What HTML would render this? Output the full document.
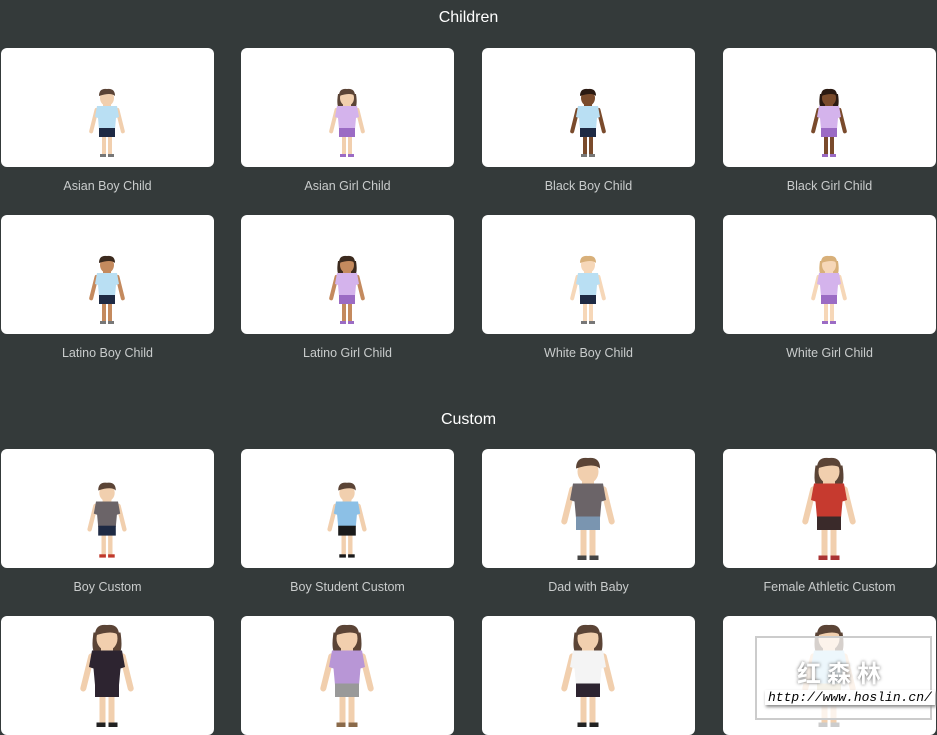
<!DOCTYPE html>
<html><head><meta charset="utf-8"><style>
body{margin:0;width:937px;height:726px;overflow:hidden;background:#343a3a;font-family:"Liberation Sans",sans-serif;position:relative}
h2{position:absolute;left:0;width:937px;text-align:center;color:#fff;font-weight:normal;font-size:16px;margin:0}
.c{position:absolute;width:213px;height:119px;background:#fff;border-radius:6px;overflow:hidden}
.l{position:absolute;width:213px;text-align:center;color:#c9cccc;font-size:12.5px}
svg{position:absolute;left:0;top:0}
.wm{position:absolute;left:755px;top:636px;width:173px;height:80px;background:rgba(255,255,255,.75);border:2px solid #ccc}
.wm b{position:absolute;left:40px;top:16px;color:#fff;font-size:24px;letter-spacing:6px;text-shadow:0 0 3px #666;font-family:"Noto Sans CJK SC",sans-serif}
.wm i{position:absolute;left:8px;top:52px;background:#fff;font-size:13px;font-family:"Liberation Mono",monospace;padding:0 3px;box-shadow:1px 2px 3px #888}
</style></head><body>
<h2 style="top:9px">Children</h2>
<h2 style="top:411px">Custom</h2>
<div id="g"></div>
<div class="wm"><b>红森林</b><i>http://www.hoslin.cn/</i></div>
<script>
var X=[1,241,482,723],T=[48,215,449,616],LY=[179,346,580,0];
var items=[
["Asian Boy Child","#f1cfae","#5b4436","#b9dff3","#1e2a44","#777",0,1.0,43],
["Asian Girl Child","#f1cfae","#5b4436","#d4b3ec","#9b6bc4","#9b6bc4",1,1.0,43],
["Black Boy Child","#7a4b2c","#2b1a12","#b9dff3","#1e2a44","#777",0,1.0,43],
["Black Girl Child","#7a4b2c","#2b1a12","#d4b3ec","#9b6bc4","#9b6bc4",1,1.0,43],
["Latino Boy Child","#c48a5e","#3c2a1e","#b9dff3","#1e2a44","#777",0,1.0,43],
["Latino Girl Child","#c48a5e","#3c2a1e","#d4b3ec","#9b6bc4","#9b6bc4",1,1.0,43],
["White Boy Child","#f6d7b8","#d8b07a","#b9dff3","#1e2a44","#777",0,1.0,43],
["White Girl Child","#f6d7b8","#d8b07a","#d4b3ec","#9b6bc4","#9b6bc4",1,1.0,43],
["Boy Custom","#f1cfae","#5b4436","#6b6468","#1e2a44","#c0392b",0,1.1,36],
["Boy Student Custom","#f1cfae","#5b4436","#8cc0e6","#1a1a1a","#1a1a1a",0,1.1,36],
["Dad with Baby","#f1cfae","#5b4436","#6b6468","#7a95b0","#444",0,1.5,12],
["Female Athletic Custom","#f1cfae","#5b4436","#c63a2f","#3a2a2a","#a33",1,1.5,12],
["","#f1cfae","#5b4436","#2d2430","#2d2430","#222",1,1.5,12],
["","#f1cfae","#5b4436","#b896d6","#999","#8a6a4a",1,1.5,12],
["","#f1cfae","#5b4436","#f4f4f4","#2d2430","#222",1,1.5,12],
["","#f1cfae","#5b4436","#b9dff3","#d8c9a8","#ccc",1,1.5,12]];
var h="";
items.forEach(function(it,i){
 var r=Math.floor(i/4),c=i%4,x=X[c],y=T[r],s=it[7];
 var oy=it[8];
 var f='<g transform="translate(106,'+oy+') scale('+s+')">'+
 (it[6]?'<path d="M-9,3 Q-11,16 -7,18 L7,18 Q11,16 9,3Z" fill="'+it[2]+'"/>':'')+
 '<rect x="-4" y="6" width="8" height="10" fill="'+it[1]+'"/>'+
 '<ellipse cx="0" cy="7" rx="7" ry="8" fill="'+it[1]+'"/>'+
 '<path d="M-8,5 Q-8,-3 0,-2 Q8,-3 8,5 Q4,1 -8,5Z" fill="'+it[2]+'"/>'+
 '<rect x="-12" y="17" width="4" height="26" rx="2" fill="'+it[1]+'" transform="rotate(14 -10 17)"/>'+
 '<rect x="8" y="17" width="4" height="26" rx="2" fill="'+it[1]+'" transform="rotate(-14 10 17)"/>'+
 '<path d="M-10,15 L10,15 L12,26 L9,27 L8,38 L-8,38 L-9,27 L-12,26Z" fill="'+it[3]+'"/>'+
 '<rect x="-5" y="38" width="4" height="26" fill="'+it[1]+'"/><rect x="1" y="38" width="4" height="26" fill="'+it[1]+'"/>'+
 '<rect x="-8" y="37" width="16" height="9" fill="'+it[4]+'"/>'+
 '<rect x="-7" y="63" width="6" height="3" fill="'+it[5]+'"/><rect x="1" y="63" width="6" height="3" fill="'+it[5]+'"/></g>';
 h+='<div class="c" style="left:'+x+'px;top:'+y+'px"><svg width="213" height="119">'+f+'</svg></div>';
 if(it[0])h+='<div class="l" style="left:'+x+'px;top:'+LY[r]+'px">'+it[0]+'</div>';
});
document.getElementById("g").innerHTML=h;
</script>
</body></html>
